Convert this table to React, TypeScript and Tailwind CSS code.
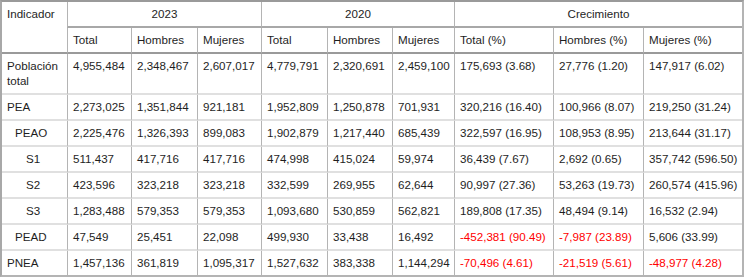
import React from "react";

type Cell = { v: string; red?: boolean };
type Row = { label: string; indent: string; cells: Cell[] };

const c = (v: string, red = false): Cell => ({ v, red });

const rows: Row[] = [
  {
    label: "Población total",
    indent: "pl-[5px]",
    cells: [
      c("4,955,484"), c("2,348,467"), c("2,607,017"), c("4,779,791"), c("2,320,691"), c("2,459,100"),
      c("175,693 (3.68)"), c("27,776 (1.20)"), c("147,917 (6.02)"),
    ],
  },
  {
    label: "PEA",
    indent: "pl-[5px]",
    cells: [
      c("2,273,025"), c("1,351,844"), c("921,181"), c("1,952,809"), c("1,250,878"), c("701,931"),
      c("320,216 (16.40)"), c("100,966 (8.07)"), c("219,250 (31.24)"),
    ],
  },
  {
    label: "PEAO",
    indent: "pl-[13px]",
    cells: [
      c("2,225,476"), c("1,326,393"), c("899,083"), c("1,902,879"), c("1,217,440"), c("685,439"),
      c("322,597 (16.95)"), c("108,953 (8.95)"), c("213,644 (31.17)"),
    ],
  },
  {
    label: "S1",
    indent: "pl-[24px]",
    cells: [
      c("511,437"), c("417,716"), c("417,716"), c("474,998"), c("415,024"), c("59,974"),
      c("36,439 (7.67)"), c("2,692 (0.65)"), c("357,742 (596.50)"),
    ],
  },
  {
    label: "S2",
    indent: "pl-[24px]",
    cells: [
      c("423,596"), c("323,218"), c("323,218"), c("332,599"), c("269,955"), c("62,644"),
      c("90,997 (27.36)"), c("53,263 (19.73)"), c("260,574 (415.96)"),
    ],
  },
  {
    label: "S3",
    indent: "pl-[24px]",
    cells: [
      c("1,283,488"), c("579,353"), c("579,353"), c("1,093,680"), c("530,859"), c("562,821"),
      c("189,808 (17.35)"), c("48,494 (9.14)"), c("16,532 (2.94)"),
    ],
  },
  {
    label: "PEAD",
    indent: "pl-[13px]",
    cells: [
      c("47,549"), c("25,451"), c("22,098"), c("499,930"), c("33,438"), c("16,492"),
      c("-452,381 (90.49)", true), c("-7,987 (23.89)", true), c("5,606 (33.99)"),
    ],
  },
  {
    label: "PNEA",
    indent: "pl-[5px]",
    cells: [
      c("1,457,136"), c("361,819"), c("1,095,317"), c("1,527,632"), c("383,338"), c("1,144,294"),
      c("-70,496 (4.61)", true), c("-21,519 (5.61)", true), c("-48,977 (4.28)", true),
    ],
  },
];

const sub = ["Total", "Hombres", "Mujeres", "Total", "Hombres", "Mujeres", "Total (%)", "Hombres (%)", "Mujeres (%)"];

export default function App() {
  return (
    <div className="w-[744px] h-[277px] bg-white overflow-hidden">
      <div
        className="w-[744px] border-t-2 border-l-2 border-r-2 border-b-2 border-t-[#9a9a9a] border-l-[#a8a8a8] border-r-[#b4b4b4] border-b-[#b4b4b4] grid grid-cols-[65px_64px_66px_64px_66px_65px_62px_99px_90px_99px] text-[11.6px] leading-[15px] text-[#1e1e1e] whitespace-nowrap"
        style={{ fontFamily: '"Liberation Sans", Arial, sans-serif' }}
      >
        {/* header row 1 */}
        <div className="row-span-2 pl-[5px] pt-[4px] pb-[5px] border-b-2 border-b-[#9a9a9a]">Indicador</div>
        <div className="col-span-3 text-center pt-[4px] pb-[5px] border-l border-l-[#b4b4b4] border-b-2 border-b-[#a8a8a8]">2023</div>
        <div className="col-span-3 text-center pt-[4px] pb-[5px] border-l border-l-[#b4b4b4] border-b-2 border-b-[#a8a8a8]">2020</div>
        <div className="col-span-3 text-center pt-[4px] pb-[5px] border-l border-l-[#b4b4b4] border-b-2 border-b-[#a8a8a8]">Crecimiento</div>
        {/* header row 2 */}
        {sub.map((s, i) => (
          <div key={i} className="pl-[5px] pt-[4px] pb-[5px] border-l border-l-[#b4b4b4] border-b-2 border-b-[#9a9a9a]">
            {s}
          </div>
        ))}
        {/* body */}
        {rows.map((r, ri) => {
          const last = ri === rows.length - 1;
          const bb = last ? "" : "border-b-2 border-b-[#e0e0e0]";
          return (
            <React.Fragment key={ri}>
              <div className={`${r.indent} pr-[4px] pt-[4px] pb-[5px] whitespace-normal ${bb}`}>{r.label}</div>
              {r.cells.map((cell, ci) => (
                <div
                  key={ci}
                  className={`pl-[5px] pt-[4px] pb-[5px] border-l border-l-[#b4b4b4] ${bb} ${cell.red ? "text-[#ff0000]" : ""}`}
                >
                  {cell.v}
                </div>
              ))}
            </React.Fragment>
          );
        })}
      </div>
    </div>
  );
}
